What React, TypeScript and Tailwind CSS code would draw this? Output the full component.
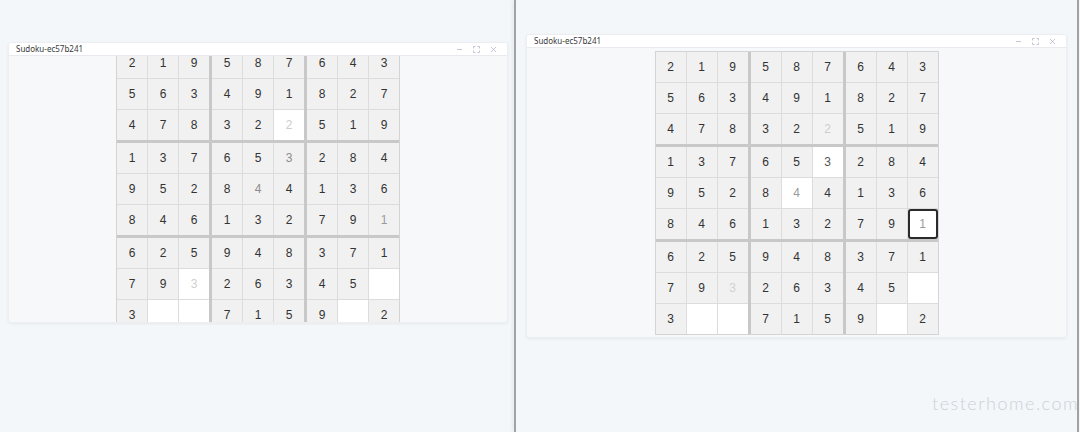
import React from "react";

// board as shown in both windows, "." = empty
const rows = [
  "219587643",
  "563491827",
  "478322519",
  "137653284",
  "952844136",
  "846132791",
  "625948371",
  "79326345.",
  "3..7159.2",
];

type CellLook = { cls: string; selected?: boolean };

const given = "bg-[#f1f1f1] text-[#333333]";
const empty = "bg-white";

// per window differences (row,col 0-based)
const leftLook: Record<string, CellLook> = {
  "2,5": { cls: "bg-white text-[#cdcdcd]" },
  "3,5": { cls: "bg-[#f1f1f1] text-[#8c8c8c]" },
  "4,4": { cls: "bg-[#f1f1f1] text-[#8c8c8c]" },
  "5,8": { cls: "bg-[#f1f1f1] text-[#9a9a9a]" },
  "7,2": { cls: "bg-white text-[#cfcfcf]" },
};

const rightLook: Record<string, CellLook> = {
  "2,5": { cls: "bg-[#f3f3f3] text-[#cdcdcd]" },
  "3,5": { cls: "bg-white text-[#555555]" },
  "4,4": { cls: "bg-white text-[#9a9a9a]" },
  "5,8": { cls: "bg-white text-[#9a9a9a]", selected: true },
  "7,2": { cls: "bg-[#f1f1f1] text-[#d2d2d2]" },
};

const Cell = ({ r, c, looks }: { r: number; c: number; looks: Record<string, CellLook> }) => {
  const ch = rows[r][c];
  const look = looks[`${r},${c}`];
  const cls = look ? look.cls : ch === "." ? empty : given;
  return (
    <div
      className={`w-[30px] h-[30px] flex items-center justify-center text-[12px] ${cls} ${
        look?.selected ? "border-2 border-[#2a2a2a] rounded-[3px]" : ""
      }`}
    >
      {ch === "." ? "" : ch}
    </div>
  );
};

const Board = ({ looks }: { looks: Record<string, CellLook> }) => (
  <div
    className="grid grid-cols-3 gap-[3px] bg-[#c8c8c8] border border-[#d4d4d4] shrink-0"
    style={{ fontFamily: '"Liberation Sans", Arial, sans-serif' }}
  >
    {[0, 1, 2, 3, 4, 5, 6, 7, 8].map((b) => {
      const br = Math.floor(b / 3) * 3;
      const bc = (b % 3) * 3;
      return (
        <div key={b} className="grid grid-cols-3 gap-px bg-[#dcdcdc]">
          {[0, 1, 2, 3, 4, 5, 6, 7, 8].map((i) => (
            <Cell key={i} r={br + Math.floor(i / 3)} c={bc + (i % 3)} looks={looks} />
          ))}
        </div>
      );
    })}
  </div>
);

const Controls = () => (
  <div className="flex items-center gap-[10px] pr-[10px] text-[#b4b8c8]">
    <svg width="7" height="7" viewBox="0 0 7 7">
      <path d="M1 3.5h5" stroke="currentColor" strokeWidth="0.8" />
    </svg>
    <svg width="7" height="7" viewBox="0 0 7 7" fill="none" stroke="currentColor" strokeWidth="0.8">
      <path d="M0.5 2.5V0.5h2M4.5 0.5h2v2M6.5 4.5v2h-2M2.5 6.5h-2v-2" />
    </svg>
    <svg width="7" height="7" viewBox="0 0 7 7">
      <path d="M1 1l5 5M6 1l-5 5" stroke="currentColor" strokeWidth="0.8" />
    </svg>
  </div>
);

const SudokuWindow = ({ size, looks }: { size: string; looks: Record<string, CellLook> }) => (
  <div
    className={`${size} flex flex-col bg-[#f7f8fa] border border-[#eceef2] rounded-[3px] shadow-[0_1px_3px_rgba(0,0,0,0.06)] overflow-hidden`}
  >
    <div className="h-[13px] shrink-0 flex items-center justify-between bg-white border-b border-[#e8eaf0]">
      <span
        className="pl-[7px] text-[8px] text-[#3a3a3a] leading-none"
        style={{ fontFamily: '"Noto Sans", "Open Sans", sans-serif' }}
      >
        Sudoku-ec57b241
      </span>
      <Controls />
    </div>
    <div className="flex-1 min-h-0 flex items-center justify-center overflow-hidden">
      <Board looks={looks} />
    </div>
  </div>
);

export default function App() {
  return (
    <div className="w-[1080px] h-[432px] flex bg-[#f4f7fa] overflow-hidden">
      <div className="w-[514px] shrink-0 pl-[8px] pt-[42px]">
        <SudokuWindow size="w-[500px] h-[281px]" looks={leftLook} />
      </div>
      <div className="w-[2px] shrink-0 bg-[#a2a2a2] shadow-[-2px_0_3px_rgba(0,0,0,0.07)]" />
      <div className="relative w-[561px] shrink-0 pl-[10px] pt-[34px]">
        <SudokuWindow size="w-[541px] h-[304px]" looks={rightLook} />
        {/* site watermark */}
        <span
          className="absolute left-[416px] top-[394px] text-[18px] leading-none tracking-[1.5px] font-light text-[#cdd0d5] whitespace-nowrap"
          style={{ fontFamily: 'Lato, "DejaVu Sans", sans-serif' }}
        >
          testerhome.com
        </span>
      </div>
      <div className="w-[2px] shrink-0 bg-[#a2a2a2]" />
      <div className="flex-1" />
    </div>
  );
}
